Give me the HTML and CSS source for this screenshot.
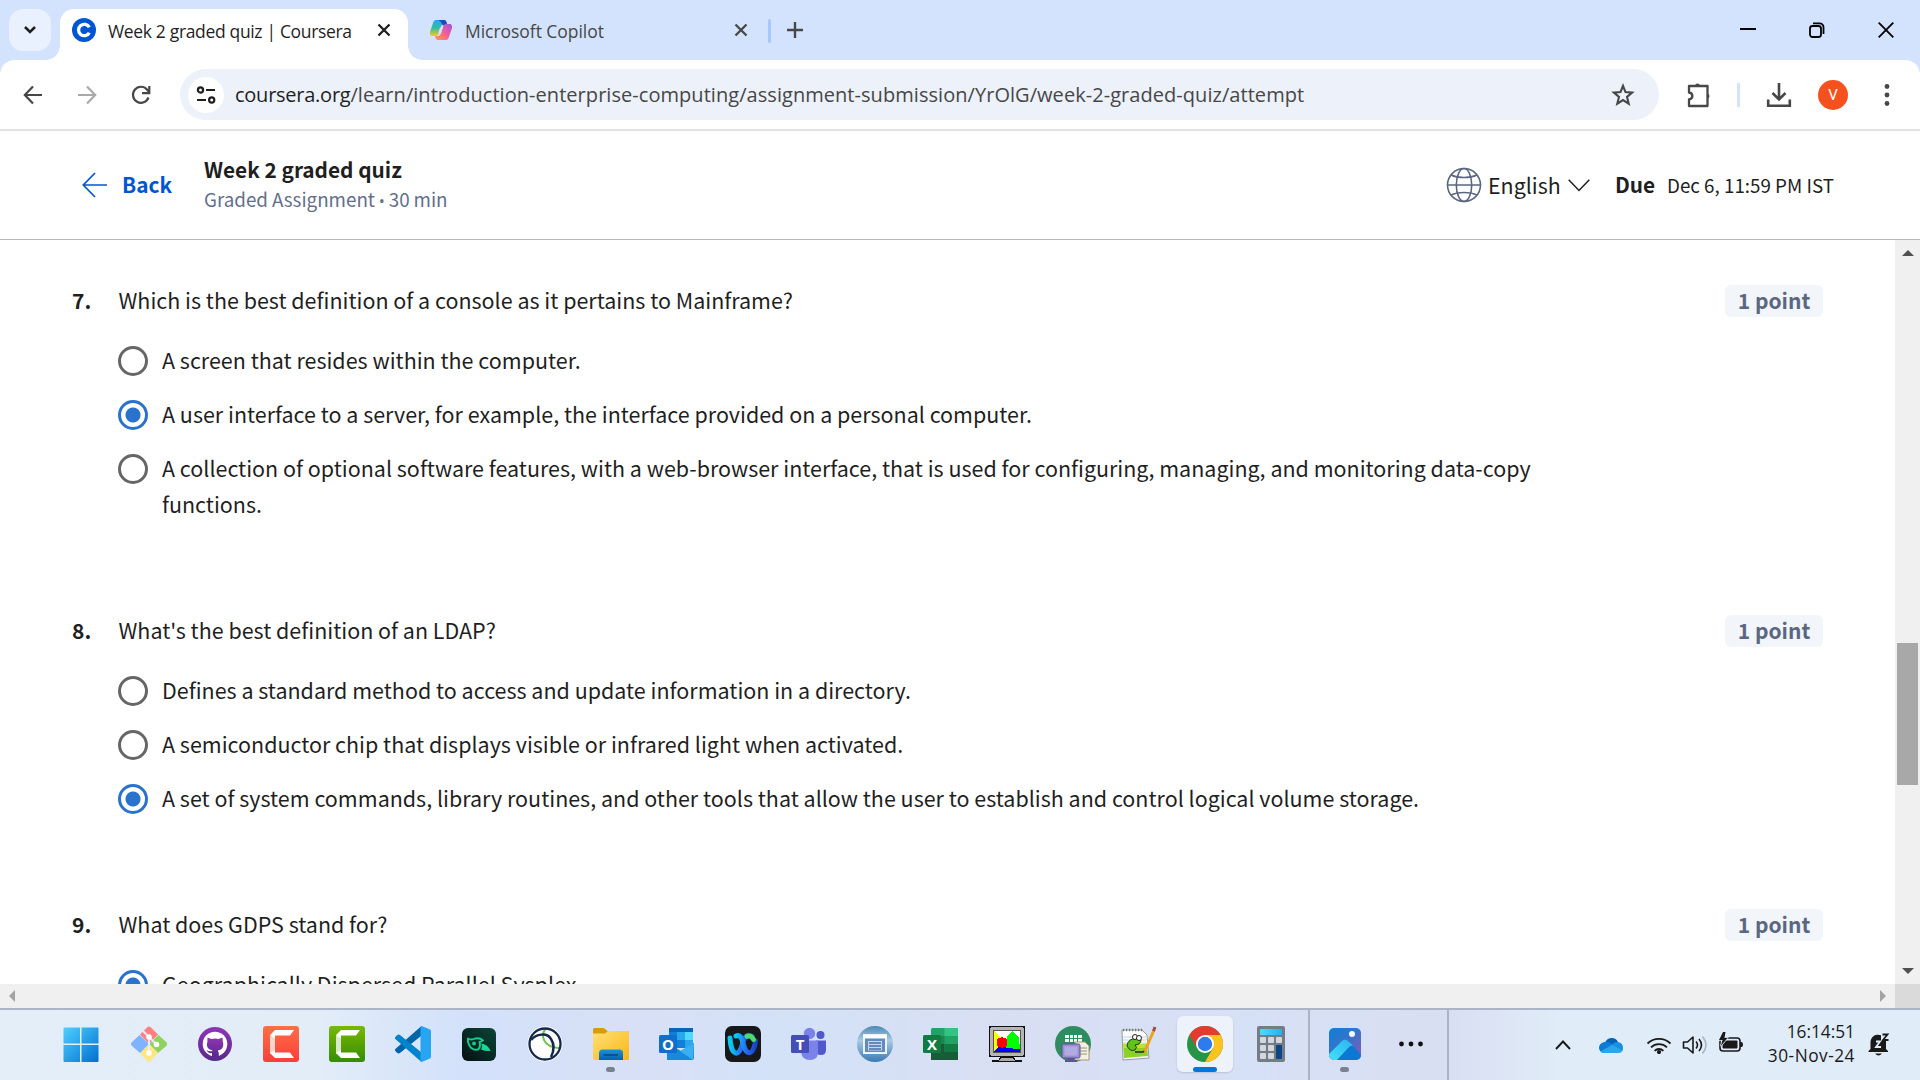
FILE: index.html
```html
<!DOCTYPE html>
<html lang="en">
<head>
<meta charset="utf-8">
<title>Week 2 graded quiz | Coursera</title>
<link rel="stylesheet" href="styles.css">
</head>
<body>
<div class="screen">
  <div class="tabstrip">
    <div class="tab-search"><svg width="14" height="10" viewBox="0 0 14 10"><path d="M2 2l5 5 5-5" fill="none" stroke="#1f1f1f" stroke-width="2.6"/></svg></div>
    <div class="tab active">
      <svg class="favicon" width="24" height="24" viewBox="0 0 24 24"><circle cx="12" cy="12" r="12" fill="#0056d2"/><path d="M17.3 9.3A5.7 5.7 0 1 0 17.3 14.7" fill="none" stroke="#fff" stroke-width="3.3"/></svg>
      <span class="tab-title t1">Week 2 graded quiz | Coursera</span>
      <svg class="close" width="14" height="14" viewBox="0 0 14 14"><path d="M1.5 1.5l11 11M12.500 1.500l-11 11" stroke="#1f1f1f" stroke-width="2.300"/></svg>
    </div>
    <div class="tab idle">
      <svg class="favicon" width="24" height="24" viewBox="0 0 24 24">
        <defs>
          <linearGradient id="ca" x1="0" y1="0" x2="0" y2="1"><stop offset="0" stop-color="#1aaef0"/><stop offset=".5" stop-color="#38b9a0"/><stop offset="1" stop-color="#f5ce16"/></linearGradient>
          <linearGradient id="cb" x1="1" y1="0" x2="0" y2="1"><stop offset="0" stop-color="#a251e8"/><stop offset=".5" stop-color="#f65e94"/><stop offset="1" stop-color="#ff9b52"/></linearGradient>
        </defs>
        <path d="M7 2h8c2 0 2.500 2 3 4h-2.500c-2 0-3 1-3.600 3L10 15c-.6 2-1.500 3-3.500 3H4c-3 0-3.500-2-2.700-5L4 5c.6-2 1.500-3 3-3z" fill="url(#ca)"/>
        <path d="M8 2h7c2 0 2.500 2 3 4l.4 1.500h-3.500c-2.500 0-2-5.500-6.900-5.500z" fill="#1650b8"/>
        <path d="M17 22H9c-2 0-2.500-2-3-4h2.500c2 0 3-1 3.600-3L14 9c.6-2 1.500-3 3.500-3H20c3 0 3.500 2 2.700 5L20 19c-.6 2-1.500 3-3 3z" fill="url(#cb)"/>
        <path d="M11 9.500h2.700l-1.800 6H9.200z" fill="#d3e3fd"/>
      </svg>
      <span class="tab-title t2">Microsoft Copilot</span>
      <svg class="close" width="14" height="14" viewBox="0 0 14 14"><path d="M1.500 1.500l11 11M12.500 1.500l-11 11" stroke="#474747" stroke-width="2.300"/></svg>
    </div>
    <div class="tab-sep"></div>
    <svg class="plus" width="16" height="16" viewBox="0 0 16 16"><path d="M8 0v16M0 8h16" stroke="#474747" stroke-width="2.400"/></svg>
    <div class="window-controls">
      <svg width="16" height="16" viewBox="0 0 16 16"><path d="M0 7h16" stroke="#000" stroke-width="2"/></svg>
      <svg width="16" height="16" viewBox="0 0 16 16"><rect x="1" y="4" width="11" height="11" rx="2.500" fill="none" stroke="#000" stroke-width="1.800"/><path d="M4 1.300h6.500a4 4 0 0 1 4 4V12" fill="none" stroke="#000" stroke-width="1.800"/></svg>
      <svg width="16" height="16" viewBox="0 0 16 16"><path d="M.7.7l14.600 14.600M15.300.7L.7 15.300" stroke="#000" stroke-width="1.800"/></svg>
    </div>
  </div>

  <div class="toolbar">
    <div class="nav">
      <svg width="20" height="20" viewBox="0 0 20 20"><path d="M19 10H2.500M10 1.500L1.800 10l8.200 8.500" fill="none" stroke="#474747" stroke-width="2.200"/></svg>
      <svg width="20" height="20" viewBox="0 0 20 20"><path d="M1 10h16.500M10 1.500L18.200 10 10 18.500" fill="none" stroke="#a9a9a9" stroke-width="2.200"/></svg>
      <svg width="20" height="20" viewBox="0 0 20 20"><path d="M17.500 12.500A8 8 0 1 1 16 4.500L18 7" fill="none" stroke="#474747" stroke-width="2.200"/><path d="M18.300 1v7.200H11" fill="none" stroke="#474747" stroke-width="2.200"/></svg>
    </div>
    <div class="omnibox">
      <div class="site-info"><svg width="20" height="20" viewBox="0 0 20 20" fill="none" stroke="#1f1f1f" stroke-width="2.200"><circle cx="4.500" cy="5" r="2.600"/><path d="M10 5h9M1 15h9"/><circle cx="15.700" cy="15" r="2.600"/></svg></div>
      <span class="url"><b>coursera.org</b>/learn/introduction-enterprise-computing/assignment-submission/YrOlG/week-2-graded-quiz/attempt</span>
      <svg class="star" width="24" height="24" viewBox="0 0 24 24"><path d="M12 2.800l2.500 6.300 6.600.5-5.100 4.300 1.700 6.700-5.700-3.600-5.700 3.600L8 13.900 2.900 9.600l6.600-.5z" fill="none" stroke="#474747" stroke-width="2.100"/></svg>
    </div>
    <svg class="ext" width="26" height="26" viewBox="0 0 26 26"><path d="M9 3.500a2.600 2.600 0 0 1 5 0z" fill="#474747"/><path d="M21.500 11.500a2.700 2.700 0 0 1 0 5.200z" fill="#474747"/><path d="M3 4h18.500v20H3v-6.500c4.500-.8 4.500-6.200 0-7z" fill="none" stroke="#474747" stroke-width="2.300" stroke-linejoin="round"/></svg>
    <div class="bar-sep"></div>
    <svg class="dl" width="26" height="26" viewBox="0 0 26 26"><path d="M13 1v16M6.500 11l6.500 6.500 6.500-6.500M2.200 17.500v6.300h21.600v-6.300" fill="none" stroke="#474747" stroke-width="2.600"/></svg>
    <div class="avatar">V</div>
    <svg class="dots" width="6" height="24" viewBox="0 0 6 24" fill="#474747"><circle cx="3" cy="3.500" r="2.400"/><circle cx="3" cy="12" r="2.400"/><circle cx="3" cy="20.500" r="2.400"/></svg>
  </div>

  <div class="page-header">
    <svg class="back-arrow" width="26" height="26" viewBox="0 0 26 26"><path d="M25 13H1.500M13 1L1.300 13 13 25" fill="none" stroke="#0056d2" stroke-width="1.700"/></svg>
    <span class="back">Back</span>
    <div class="heading">
      <div class="title">Week 2 graded quiz</div>
      <div class="subtitle">Graded Assignment <span class="bullet">•</span> 30 min</div>
    </div>
    <svg class="globe" width="36" height="36" viewBox="0 0 36 36" fill="none" stroke="#5b6780" stroke-width="1.600"><circle cx="18" cy="18" r="16.500"/><ellipse cx="18" cy="18" rx="7.700" ry="16.500"/><path d="M1.500 18h33M5 8c7 3.400 19 3.400 26 0M5 28c7-3.400 19-3.400 26 0"/></svg>
    <span class="lang">English</span>
    <svg class="chev" width="22" height="13" viewBox="0 0 22 13"><path d="M.7.8L11 11.500 21.300.8" fill="none" stroke="#1f1f1f" stroke-width="1.500"/></svg>
    <span class="due">Due</span>
    <span class="date">Dec 6, 11:59 PM IST</span>
  </div>

  <div class="viewport">
    <div class="content">
      <section class="question">
        <div class="q-head"><span class="num">7.</span><span class="q-text">Which is the best definition of a console as it pertains to Mainframe?</span><span class="badge">1 point</span></div>
        <div class="option"><i class="radio"></i><span>A screen that resides within the computer.</span></div>
        <div class="option"><i class="radio on"></i><span>A user interface to a server, for example, the interface provided on a personal computer.</span></div>
        <div class="option"><i class="radio"></i><span>A collection of optional software features, with a web-browser interface, that is used for configuring, managing, and monitoring data-copy<br>functions.</span></div>
      </section>
      <section class="question">
        <div class="q-head"><span class="num">8.</span><span class="q-text">What's the best definition of an LDAP?</span><span class="badge">1 point</span></div>
        <div class="option"><i class="radio"></i><span>Defines a standard method to access and update information in a directory.</span></div>
        <div class="option"><i class="radio"></i><span>A semiconductor chip that displays visible or infrared light when activated.</span></div>
        <div class="option"><i class="radio on"></i><span>A set of system commands, library routines, and other tools that allow the user to establish and control logical volume storage.</span></div>
      </section>
      <section class="question">
        <div class="q-head"><span class="num">9.</span><span class="q-text">What does GDPS stand for?</span><span class="badge">1 point</span></div>
        <div class="option"><i class="radio on"></i><span>Geographically Dispersed Parallel Sysplex</span></div>
      </section>
    </div>
    <div class="vscroll">
      <svg width="12" height="6" viewBox="0 0 12 6"><path d="M0 6L6 0l6 6z" fill="#505050"/></svg>
      <div class="thumb"></div>
      <svg class="down" width="12" height="6" viewBox="0 0 12 6"><path d="M0 0h12L6 6z" fill="#505050"/></svg>
    </div>
  </div>
  <div class="hscroll">
    <svg width="6" height="12" viewBox="0 0 6 12"><path d="M6 0v12L0 6z" fill="#a3a3a3"/></svg>
    <svg width="6" height="12" viewBox="0 0 6 12"><path d="M0 0v12l6-6z" fill="#a3a3a3"/></svg>
    <div class="corner"></div>
  </div>

  <div class="taskbar">
    <div class="apps">
      <div class="app"><svg width="36" height="36" viewBox="0 0 36 36"><defs><linearGradient id="w" x1="0" y1="0" x2="1" y2="1"><stop offset="0" stop-color="#4fd0ff"/><stop offset="1" stop-color="#0070d0"/></linearGradient></defs><path d="M.5 2.500a1 1 0 0 1 1-1H17v16H.5zM18.500 1.500h16a1 1 0 0 1 1 1v15h-17zM.5 19H17v17H1.500a1 1 0 0 1-1-1zM18.500 19h17v16a1 1 0 0 1-1 1h-16z" fill="url(#w)"/></svg></div>
      <div class="app"><svg width="36" height="36" viewBox="0 0 36 36"><path d="M16 1.500q2-2 4 0L27 8.500 18 18 9 8.500z" fill="#ff8080"/><path d="M27.500 9l8 7.300q1 1.700 0 3.400L27 27l-9-9z" fill="#8fd260"/><path d="M9 27l9-9 9 9-8 8.500q-1 .8-2 0z" fill="#ffe680"/><path d="M8.500 9L18 18l-9 9-8.500-7.500q-1-1.500 0-3z" fill="#80b3ff"/><path d="M12 5l6 6v16M18 11l8 8" fill="none" stroke="#e2ecf8" stroke-width="2"/><circle cx="18" cy="11" r="2.800" fill="#fff"/><circle cx="18" cy="27" r="2.800" fill="#fff"/><circle cx="25.500" cy="18.500" r="2.800" fill="#fff"/></svg></div>
      <div class="app"><svg width="36" height="36" viewBox="0 0 36 36"><defs><linearGradient id="gh" x1="0" y1="0" x2="0" y2="1"><stop offset="0" stop-color="#9035b5"/><stop offset="1" stop-color="#59298b"/></linearGradient></defs><circle cx="18" cy="18" r="17" fill="url(#gh)"/><circle cx="18" cy="18" r="12.300" fill="#fff"/><path d="M10.500 11.500l4 1.400q3.500-.8 7 0l4-1.400.3 4.500q1 2 .2 4.500-1 3.500-5.200 4l1 2.500V31H15v-4q-4 .8-5.500-3 2.500 2 5.600 1l.3-.7q-4.300-.6-5.300-4-.7-2.300.3-4.300z" fill="url(#gh)"/></svg></div>
      <div class="app"><svg width="36" height="36" viewBox="0 0 36 36"><defs><linearGradient id="cr" x1="0" y1="0" x2="0" y2="1"><stop stop-color="#ff7043"/><stop offset="1" stop-color="#fc3d3d"/></linearGradient></defs><rect width="36" height="36" rx="3" fill="url(#cr)"/><path d="M7 9l5 3v13l-5 3z" fill="#ffd5ce"/><path d="M7 9l5-5h19l-4 5.500H12V13zM7 27l5 5h19l-4-5.500H12V24z" fill="#fff"/></svg></div>
      <div class="app"><svg width="36" height="36" viewBox="0 0 36 36"><defs><linearGradient id="cg" x1="0" y1="0" x2="0" y2="1"><stop stop-color="#78b900"/><stop offset="1" stop-color="#378c05"/></linearGradient></defs><rect width="36" height="36" rx="3" fill="url(#cg)"/><path d="M7 9l5 3v13l-5 3z" fill="#d7e9c8"/><path d="M7 9l5-5h19l-4 5.500H12V13zM7 27l5 5h19l-4-5.500H12V24z" fill="#fff"/></svg></div>
      <div class="app"><svg width="36" height="36" viewBox="0 0 36 36"><path d="M26.500 0v9.500L5 27q-1.500 1-3-.3L.6 25.300q-1.300-1.500 0-2.600z" fill="#0065a9"/><path d="M26.500 36v-9.500L5 9Q3.500 8 2 9.300L.6 10.700q-1.300 1.500 0 2.600z" fill="#0083cd"/><path d="M26.500 0L35 3.500q1 .5 1 2v25q0 1.500-1 2L26.500 36q-1 0-1-1.500v-33Q25.500 0 26.500 0z" fill="#27a5f2"/></svg></div>
      <div class="app"><svg width="36" height="36" viewBox="0 0 36 36"><defs><linearGradient id="sq" x1="0" y1="1" x2="1" y2="0"><stop stop-color="#050f10"/><stop offset="1" stop-color="#0b4538"/></linearGradient></defs><rect x="1" y="2" width="34" height="33" rx="6" fill="url(#sq)"/><path d="M7 12.500q3 1.800 6 .4 5-2 9 1.500-1.500 1.500-3.500 1.600 1.500 5-1.500 7.500-7 1-9-5-1.500-2.500-1-6z" fill="none" stroke="#0bcf8d" stroke-width="2" stroke-linejoin="round"/><circle cx="13" cy="17.500" r="2" fill="#0bcf8d"/><path d="M20 17.500q7 .5 9.500 7.500-5 .5-9.500-1.500 2-3 0-6z" fill="#14d995"/></svg></div>
      <div class="app"><svg width="36" height="36" viewBox="0 0 36 36"><circle cx="18" cy="18" r="17.500" fill="#fff"/><path d="M18.500 3c-5 6-3 18 13.500 19" fill="none" stroke="#6cc04a" stroke-width="2"/><circle cx="18" cy="18" r="15.500" fill="none" stroke="#14284b" stroke-width="2.300"/><path d="M4 14c5-6 16-8 20-1 4 6 3 12 0 18" fill="none" stroke="#14284b" stroke-width="2.500"/></svg></div>
      <div class="app running"><svg width="36" height="36" viewBox="0 0 36 36"><defs><linearGradient id="fo" x1="0" y1="0" x2="1" y2="1"><stop stop-color="#ffe07a"/><stop offset="1" stop-color="#f9b712"/></linearGradient><linearGradient id="fb" x1="0" y1="0" x2="0" y2="1"><stop stop-color="#1b93db"/><stop offset="1" stop-color="#0860ae"/></linearGradient></defs><path d="M0 3.500Q0 2 1.500 2H10q1 0 2 1l2.500 2H34q2 0 2 2v8H0z" fill="#dc9a0a"/><path d="M0 7.500h12l3-2.500h19.500Q36 5 36 6.500v26q0 1.500-1.500 1.500h-33Q0 34 0 32.500z" fill="url(#fo)"/><path d="M6 34v-7q0-3.500 3.500-3.500h17Q30 23.500 30 27v7z" fill="url(#fb)"/><path d="M10.500 29h14.500" stroke="#074887" stroke-width="1.600"/></svg></div>
      <div class="app"><svg width="36" height="36" viewBox="0 0 36 36"><path d="M10 2h24v18H10z" fill="#0a64b8"/><path d="M10 6h8v8h-8zM18 14h8v8h-8z" fill="#127fd6"/><path d="M18 6h8v8h-8z" fill="#28a8ea"/><path d="M26 6h8v8h-8z" fill="#50d9ff"/><path d="M26 14h8v8h-8z" fill="#28a8ea"/><path d="M8 17l14 8 13-8v15q0 2-2 2H8z" fill="#1989dc"/><path d="M34 34L21 25l14-8z" fill="#3bb0ef"/><rect y="9" width="18" height="18" rx="1.500" fill="#0f6fca"/><text x="9" y="23.500" class="glyph">O</text></svg></div>
      <div class="app"><svg width="36" height="36" viewBox="0 0 36 36"><defs><linearGradient id="wx" x1="0" y1="0" x2="1" y2="0"><stop stop-color="#08cdf0"/><stop offset=".55" stop-color="#2767f5"/><stop offset="1" stop-color="#1845c5"/></linearGradient></defs><rect width="36" height="36" rx="7" fill="#171819"/><path d="M5 12c1 18 9 20 12.500 6 2.500-9 5-10 9.500-8" fill="none" stroke="url(#wx)" stroke-width="5" stroke-linecap="round"/><path d="M11 10c5-2 6 3 8 10 3 11 10 8 11.500-5" fill="none" stroke="url(#wx)" stroke-width="5" stroke-linecap="round"/><path d="M22 10.500q4-2 6.500 3" fill="none" stroke="#4bdc69" stroke-width="5" stroke-linecap="round"/></svg></div>
      <div class="app"><svg width="36" height="36" viewBox="0 0 36 36"><circle cx="18.500" cy="7.500" r="5.700" fill="#7b83eb"/><circle cx="29.500" cy="9" r="4" fill="#5059c9"/><path d="M25 14.500h10V24q0 5-5 5t-6-4z" fill="#5059c9"/><path d="M10 14.500h17v11.500q0 8-8 8t-9-8z" fill="#7b83eb"/><rect y="9" width="18" height="18" rx="1.500" fill="#464db8"/><text x="9" y="23.500" class="glyph">T</text></svg></div>
      <div class="app"><svg width="36" height="36" viewBox="0 0 36 36"><defs><linearGradient id="rn" x1="0" y1="0" x2="0" y2="1"><stop stop-color="#4d88b6"/><stop offset=".4" stop-color="#a8cbe2"/><stop offset="1" stop-color="#3979b2"/></linearGradient></defs><circle cx="18" cy="18" r="18" fill="url(#rn)"/><rect x="7" y="9" width="22" height="18" fill="#6589bc" stroke="#eef3fa" stroke-width="2"/><path d="M7 11h22" stroke="#fff" stroke-width="3"/><rect x="11" y="15" width="14" height="9.500" fill="#c5d7ef"/><path d="M12 17h12M12 20h12M12 23h12" stroke="#4770aa" stroke-width="1.400"/></svg></div>
      <div class="app"><svg width="36" height="36" viewBox="0 0 36 36"><rect x="8" y="2" width="27" height="32" rx="1.500" fill="#21a366"/><path d="M21.500 2H34q1 0 1 1v7H21.500z" fill="#33c481"/><path d="M8 10h13.500v8H8z" fill="#19864c"/><path d="M8 18h13.500v8H35v8H8z" fill="#185c37"/><path d="M21.500 18H35v8H21.500z" fill="#107c41"/><rect y="9" width="18" height="18" rx="1.500" fill="#107c41"/><text x="9" y="23.500" class="glyph">X</text></svg></div>
      <div class="app"><svg width="36" height="36" viewBox="0 0 36 36" shape-rendering="crispEdges"><rect x=".7" y=".7" width="34.600" height="29.600" rx="1" fill="#b5b5b5" stroke="#111" stroke-width="1.500"/><rect x="4.500" y="4.500" width="27" height="21.500" fill="#fff" stroke="#555"/><path d="M5 5l8 8-2 9-6 3z" fill="#ff0"/><path d="M5 25l4-4 22 1v4H5z" fill="#00f"/><path d="M17 22l1-11 5-6 7 7 1 11z" fill="#0f0"/><path d="M8 13l5-2 5 2v7l-5 2-5-2z" fill="red"/><path d="M12 31h12l2 3h6v1.500H3V34h7z" fill="#aaa" stroke="#111"/></svg></div>
      <div class="app"><svg width="36" height="36" viewBox="0 0 36 36"><circle cx="18" cy="18" r="18" fill="#2f8c60"/><g fill="#f2fbf2"><path d="M10 9h4v3h-4zM15 9h3v3h-3zM19 9h3v3h-3zM23 9h4v3h-4zM10 13h4v3h-4zM15 13h3v3h-3zM19 13h3v3h-3zM23 13h4v3h-4z"/></g><path d="M20 16h10l4 4v14H20z" fill="#f3f1df" stroke="#a09878"/><path d="M24 22h8M24 25h8M24 28h8" stroke="#9b9478"/><rect x="7" y="18" width="18" height="14" rx="1.500" fill="#9a90cf" stroke="#5b5296"/><rect x="9.500" y="20.500" width="13" height="9" fill="#b3abdf"/><path d="M13 32h6v2h3v2H10v-2h3z" fill="#5d5496"/></svg></div>
      <div class="app"><svg width="36" height="36" viewBox="0 0 36 36"><path d="M1 4h20l5 5 2 23-26 2z" fill="#fdfdfd" stroke="#999"/><path d="M2 11h23M2 14h23M2 17h23" stroke="#bcd3ec"/><path d="M2 18h24l1 12-24 2z" fill="#8ad12a"/><path d="M2 17h24v5H2z" fill="#d8e94b" opacity=".6"/><path d="M6 20q1-8 9-7l2-2q3 0 3 4-1 4-6 4 3 2 0 5-5 2-8-4z" fill="#5fc31a" stroke="#243a12"/><circle cx="14" cy="11" r="2.500" fill="#fff" stroke="#222"/><circle cx="18" cy="12" r="2.500" fill="#fff" stroke="#222"/><path d="M2 4h20" stroke="#777" stroke-width="2.500" stroke-dasharray="1.200 1.800"/><path d="M23 27L33 4" stroke="#eaa21f" stroke-width="3"/><path d="M32.500 5L34 1" stroke="#a1473d" stroke-width="3"/><path d="M14 26h8l1-1" stroke="#222" stroke-width="1.500" fill="none"/></svg></div>
      <div class="app current"><svg width="36" height="36" viewBox="0 0 36 36"><circle cx="18" cy="18" r="18" fill="#269447"/><path d="M18 9h15.600A18 18 0 0 1 18 36l7.800-13.500z" fill="#fcc31e"/><path d="M2.400 9A18 18 0 0 1 33.600 9H18l-7.800 13.500z" fill="#e33b2e"/><circle cx="18" cy="18" r="9" fill="#fff"/><circle cx="18" cy="18" r="7.200" fill="#2e7bed"/></svg></div>
      <div class="app"><svg width="36" height="36" viewBox="0 0 36 36"><defs><linearGradient id="cd" x1="0" x2="1" y1="0" y2="0"><stop stop-color="#4cdcf8"/><stop offset="1" stop-color="#22b3ec"/></linearGradient></defs><rect x="4" width="28" height="36" rx="2" fill="#747c86"/><rect x="7" y="3" width="22" height="6" rx="1" fill="url(#cd)"/><g fill="#d3d8de"><rect x="7" y="11" width="6" height="6" rx="1"/><rect x="15" y="11" width="6" height="6" rx="1"/><rect x="23" y="11" width="6" height="6" rx="1"/><rect x="7" y="19" width="6" height="6" rx="1"/><rect x="15" y="19" width="6" height="6" rx="1"/><rect x="7" y="27" width="6" height="6" rx="1"/><rect x="15" y="27" width="6" height="6" rx="1"/></g><rect x="23" y="19" width="6" height="14" rx="1" fill="#0d4585"/></svg></div>
    </div>
    <div class="overflow">
      <div class="app running"><svg width="36" height="36" viewBox="0 0 36 36"><defs><linearGradient id="ph" x1="0" y1="0" x2="1" y2="1"><stop stop-color="#0d7fd8"/><stop offset=".5" stop-color="#3a73c8"/><stop offset="1" stop-color="#8e55b7"/></linearGradient><linearGradient id="pm" x1="0" y1="1" x2="1" y2="0"><stop stop-color="#45e2fb"/><stop offset="1" stop-color="#2ab4ee"/></linearGradient><clipPath id="pc"><rect x="2" y="2" width="32" height="32" rx="5"/></clipPath></defs><g clip-path="url(#pc)"><rect x="2" y="2" width="32" height="32" fill="url(#ph)"/><path d="M9 35l13-14q2.500-2 5 0l8 9v5z" fill="#0b79d3"/><path d="M1 29l14-14q3-3 6 0l5 4.500q-2-.5-4 1.500L9 35H1z" fill="url(#pm)"/></g><circle cx="25" cy="8" r="3" fill="#f4f8ff"/></svg></div>
      <svg class="more" width="26" height="6" viewBox="0 0 26 6" fill="#111"><circle cx="3.500" cy="3" r="2.400"/><circle cx="13" cy="3" r="2.400"/><circle cx="22.500" cy="3" r="2.400"/></svg>
    </div>
    <div class="tray">
      <svg class="caret" width="16" height="10" viewBox="0 0 16 10"><path d="M1 9l7-7.500L15 9" fill="none" stroke="#1a1a1a" stroke-width="1.900"/></svg>
      <svg class="onedrive" width="24" height="16" viewBox="0 0 24 16"><path d="M6 6a7 7 0 0 1 13-1l-4 6z" fill="#0462b8"/><path d="M5.500 5q3-1 6 1l8 5-7 5H5A5.300 5.300 0 0 1 0 10.500Q.3 6 5.500 5z" fill="#0d7ad5"/><path d="M13 8q2-3.500 6-3 5 1 5 6 0 2-1 3.500z" fill="#1490df"/><path d="M1.500 14.500L13 7.800l10.500 5.700Q22.500 16 19.500 16H5q-2.300 0-3.500-1.500z" fill="#28a8ea"/></svg>
      <svg class="wifi" width="26" height="18" viewBox="0 0 26 18" fill="none" stroke="#1a1a1a" stroke-width="1.800"><path d="M1.500 7.500a16.500 16.500 0 0 1 23 0M5 11.300a11.500 11.500 0 0 1 16 0M8.600 14.800a6.300 6.300 0 0 1 8.800 0"/><circle cx="13" cy="16" r="1.200" fill="#1a1a1a"/></svg>
      <svg class="vol" width="26" height="20" viewBox="0 0 26 20" fill="none" stroke="#1a1a1a" stroke-width="1.600"><path d="M1.500 7h4l5.500-5v16l-5.500-5h-4z" stroke-linejoin="round"/><path d="M14 6.500q3 3.500 0 7M17 4q5 6 0 12"/><path d="M20.500 1.500q7 8.500 0 17" stroke="#aab5c2"/></svg>
      <svg class="batt" width="26" height="24" viewBox="0 0 26 24"><rect x="2" y="7" width="20" height="13" rx="3" fill="none" stroke="#1a1a1a" stroke-width="1.600"/><rect x="4.500" y="9.500" width="15" height="8" rx="1" fill="#1a1a1a"/><path d="M22 11h1.500q1.500 0 1.500 2.500t-1.500 2.500H22z" fill="#1a1a1a"/><path d="M5 1L1 9h3.500L2.800 15 9.500 7H6.500l1-6z" fill="#1a1a1a" stroke="#e2edf8" stroke-width="1.400" paint-order="stroke"/></svg>
      <div class="clock"><div class="time">16:14:51</div><div class="day">30-Nov-24</div></div>
      <svg class="bell" width="22" height="24" viewBox="0 0 22 24"><path d="M2.500 17V10A7.500 7.500 0 0 1 13 3.300V9h5v8l2 2v1H.5v-1zM7 21.500h7q-3.500 4-7 0z" fill="#1a1a1a"/><path d="M14.500 2.500h5L15 8h5.500" fill="none" stroke="#1a1a1a" stroke-width="1.800"/><path d="M8 9.500h4L8 15h5" fill="none" stroke="#e2edf8" stroke-width="1.800"/></svg>
    </div>
  </div>
</div>
</body>
</html>
```
FILE: styles.css
```css
* { box-sizing: border-box; }
body { margin: 0; }
svg { display: block; flex: none; }
span, .title, .subtitle, .time, .day { white-space: nowrap; }

.screen {
  width: 1920px; height: 1080px; overflow: hidden;
  display: flex; flex-direction: column;
  background: #fff; color: #1f1f1f;
  font-family: "Noto Sans CJK SC", "Noto Sans", sans-serif;
}

/* Browser chrome */
.tabstrip, .toolbar { font-family: "Open Sans", "Noto Sans", sans-serif; }
.tabstrip { height: 60px; flex: none; display: flex; align-items: flex-start; background: #d3e3fd; }
.tab-search { width: 42px; height: 42px; margin: 9px 9px 0; border-radius: 14px; background: #e9f0fe; display: flex; align-items: center; justify-content: center; }
.tab { display: flex; align-items: center; height: 42px; margin-top: 9px; }
.tab.active { position: relative; width: 348px; height: 51px; padding: 0 17px 9px 12px; background: #fff; border-radius: 14px 14px 0 0; }
.tab.active::before, .tab.active::after { content: ""; position: absolute; bottom: 0; width: 14px; height: 14px; }
.tab.active::before { left: -14px; background: radial-gradient(circle at 0 0, transparent 13.5px, #fff 14px); }
.tab.active::after { right: -14px; background: radial-gradient(circle at 100% 0, transparent 13.5px, #fff 14px); }
.tab.idle { width: 360px; padding: 0 20px 0 21px; }
.tab .close { margin-left: auto; }
.tab-title { margin-left: 12px; padding-top: 2px; font-size: 17.5px; }
.t1 { letter-spacing: -.34px; }
.t2 { color: #474747; letter-spacing: -.04px; }
.tab-sep { width: 3px; height: 24px; margin: 19px 16px 0 0; background: #a8c7fa; border-radius: 2px; }
.plus { margin-top: 22px; }
.window-controls { display: flex; gap: 53px; margin: 22px 26px 0 auto; }

.toolbar { height: 71px; flex: none; display: flex; align-items: center; border-bottom: 2px solid #e1e1e1; background: radial-gradient(circle at 14px 14px, #fff 13.5px, #d3e3fd 14px) 0 0 / 14px 14px no-repeat, radial-gradient(circle at 0 14px, #fff 13.5px, #d3e3fd 14px) 100% 0 / 14px 14px no-repeat, #fff; }
.nav { display: flex; gap: 34px; padding-left: 23px; width: 180px; }
.omnibox { width: 1479px; height: 51px; border-radius: 26px; background: #ecf1fa; display: flex; align-items: center; padding: 0 24px 0 8px; }
.site-info { width: 36px; height: 36px; border-radius: 50%; background: #fff; display: flex; align-items: center; justify-content: center; flex: none; }
.url { margin-left: 11px; font-size: 20px; letter-spacing: .05px; color: #474747; }
.url b { font-weight: 400; letter-spacing: -.25px; color: #1f1f1f; }
.star { margin-left: auto; }
.ext { margin-left: 27px; }
.bar-sep { width: 3px; height: 24px; margin-left: 25px; background: #d3e3fd; }
.dl { margin-left: 26px; }
.avatar { width: 30px; height: 30px; margin-left: 26px; border-radius: 50%; background: #f4511e; color: #fff; font: 15px/31px Roboto, sans-serif; text-align: center; }
.dots { margin-left: 36px; }

/* Course header */
.page-header { height: 109px; flex: none; display: flex; align-items: center; padding-left: 82px; border-bottom: 1px solid #b8b8b8; }
.back { width: 81px; padding: 0 0 2px 14px; margin-right: 15px; font-size: 20.8px; font-weight: 700; color: #0056d2; }
.heading { width: 1242px; padding-bottom: 2px; }
.title { font-size: 20.8px; line-height: 30px; font-weight: 700; }
.subtitle { font-size: 18.8px; line-height: 30px; color: #636f8a; word-spacing: -.3px; }
.bullet { font-family: "Open Sans", sans-serif; font-size: 16px; line-height: 1; }
.lang { width: 73px; margin-left: 6px; padding-bottom: 2px; font-size: 21.4px; }
.chev { margin-left: 7px; }
.due { width: 52px; margin-left: 25px; padding-bottom: 2px; font-size: 20.8px; font-weight: 700; }
.date { padding-bottom: 2px; font-size: 18.8px; }

/* Quiz */
.viewport { height: 744px; flex: none; display: flex; overflow: hidden; }
.content { width: 1895px; padding: 43px 72px 0; font-size: 21.48px; line-height: 36px; }
.question:nth-child(1) { height: 330px; }
.question:nth-child(2) { height: 294px; }
.q-head { display: flex; align-items: center; height: 36px; margin-bottom: 24px; }
.num { width: 46.500px; font-size: 21px; font-weight: 700; }
.num, .q-text { margin-top: -2px; }
.badge { margin-left: auto; width: 98px; height: 32px; border-radius: 6px; background: #f2f5fa; color: #5b6780; font-size: 21px; font-weight: 700; line-height: 31px; text-align: center; }
.option { display: flex; margin: 0 0 18px 45.500px; }
.option span { margin: -1px 0 1px; }
.radio { width: 30px; height: 30px; margin: 3px 14.500px 0 0; border: 3px solid #666; border-radius: 50%; flex: none; }
.radio.on { border-color: #2a73cc; background: radial-gradient(circle, #2a73cc 7px, transparent 8px); }

.vscroll { width: 25px; background: #f0f0f0; display: flex; flex-direction: column; align-items: center; padding-top: 10px; }
.thumb { width: 21px; height: 142px; margin-top: 387px; background: #a8a8a8; }
.down { margin: 183px 0 0; }
.hscroll { height: 24px; flex: none; display: flex; align-items: center; padding-left: 9px; background: #f0f0f0; }
.hscroll svg + svg { margin-left: auto; margin-right: 9px; }
.corner { width: 25px; height: 24px; background: #dadada; }

/* Taskbar */
.taskbar { height: 72px; flex: none; display: flex; border-top: 2px solid #acb5c7; background: linear-gradient(90deg, #e4eef8 0, #e2edf8 320px, #d3e1fa 460px, #d8e0f6 660px, #d3e2f8 760px, #d9dff3 1010px, #d6e0f6 1250px, #d9dff2 1450px, #e0ecf8 1560px, #e0edf9 1920px); }
.apps { display: flex; width: 1308px; padding: 6px 0 0 53px; gap: 10px; }
.apps .app:first-child { margin-right: 2px; }
.app { position: relative; width: 56px; height: 56px; display: flex; align-items: center; justify-content: center; flex: none; }
.app.running::after, .app.current::after { content: ""; position: absolute; bottom: 0; left: 23px; width: 9px; height: 5px; border-radius: 3px; background: #7b828f; }
.app.current { background: #edf2fb; border-radius: 6px; box-shadow: 0 1px 2px #b8c2d6; }
.app.current::after { left: 16px; width: 24px; background: #0078d7; }
.glyph { font: 700 15px "Open Sans", sans-serif; fill: #fff; text-anchor: middle; }
.overflow { display: flex; width: 141px; padding: 6px 0 0 7px; border-left: 2px solid #acb3c5; border-right: 2px solid #acb3c5; }
.more { margin: 25px 0 0 25px; }
.tray { display: flex; align-items: center; flex: 1; padding-left: 106px; font-family: "Open Sans", "Noto Sans", sans-serif; }
.onedrive { margin-left: 28px; }
.wifi { margin-left: 23px; }
.vol { margin-left: 10px; }
.batt { margin-left: 10px; margin-top: -4px; }
.clock { width: 111px; padding-bottom: 2px; font-size: 17.3px; line-height: 24px; text-align: right; color: #1a1a1a; }
.day { letter-spacing: .5px; }
.bell { margin: -2px 0 0 13px; }
```
